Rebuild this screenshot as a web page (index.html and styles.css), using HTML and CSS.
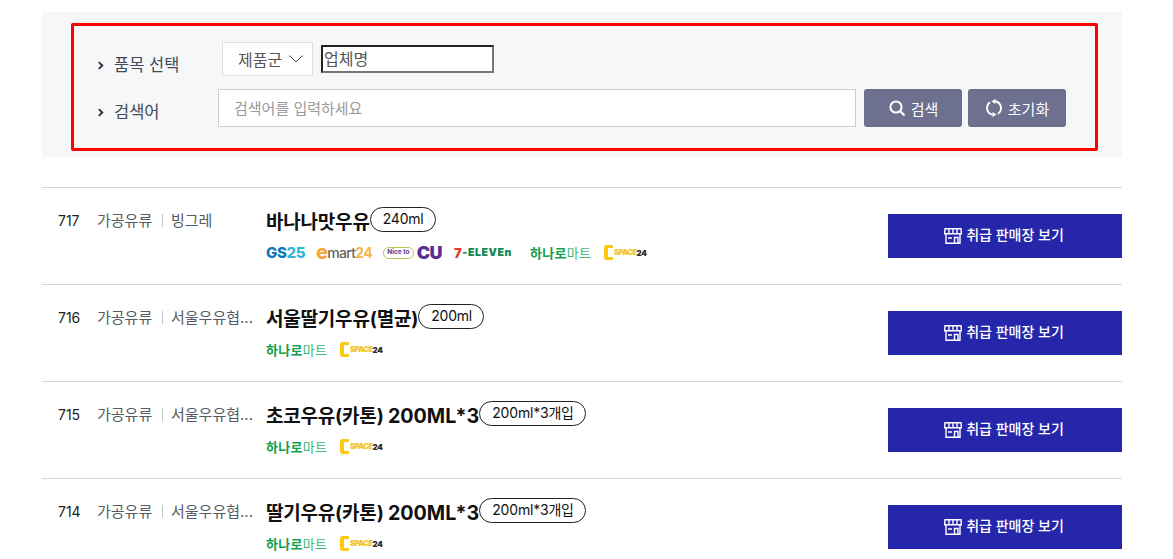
FILE: index.html
```html
<!DOCTYPE html>
<html lang="ko">
<head>
<meta charset="utf-8">
<title>품목 검색</title>
<link rel="stylesheet" href="styles.css">
</head>
<body>
<main class="page">
  <section class="search-panel">
    <form class="search-box">
      <div class="form-row row-one">
        <span class="field-label">품목 선택</span>
        <div class="select-box">제품군
          <svg class="chev" width="14" height="8" viewBox="0 0 14 8"><path d="M.5 .5l6.500 6.500 6.500-6.500" fill="none" stroke="#444" stroke-width="1"/></svg>
        </div>
        <input class="plain-input" type="text" value="업체명">
      </div>
      <div class="form-row row-two">
        <span class="field-label">검색어</span>
        <input class="keyword" type="text" placeholder="검색어를 입력하세요">
        <button class="action" type="button">
          <svg width="18" height="18" viewBox="0 0 18 18"><circle cx="8" cy="8" r="5.600" fill="none" stroke="#fff" stroke-width="2"/><path d="M12 12l4.500 4.500" stroke="#fff" stroke-width="2.200"/></svg>
          검색
        </button>
        <button class="action" type="button">
          <svg width="18" height="18" viewBox="0 0 18 18"><path d="M5 3.300A7 7 0 0 0 7.500 15.800M12.900 14.800A7 7 0 0 0 10.500 2.200" fill="none" stroke="#fff" stroke-width="1.900"/><path d="M10.500 -.2v5.200L6.500 2.500zM7.500 13v5l4-2.500z" fill="#fff"/></svg>
          초기화
        </button>
      </div>
    </form>
  </section>

  <ul class="product-list">
    <li class="product">
      <span class="num">717</span>
      <span class="cat">가공유류</span>
      <span class="brand">빙그레</span>
      <div class="info">
        <div class="title-line"><strong class="name">바나나맛우유</strong><span class="pill">240ml</span></div>
        <div class="logos">
          <span class="logo gs"><b>GS</b><i>25</i></span>
          <span class="logo emart"><b>e</b><u>mart</u><i>24</i></span>
          <span class="logo cu"><em>Nice to</em><b>CU</b></span>
          <span class="logo seven"><b>7</b><i>-ELEVEn</i></span>
          <span class="logo hanaro"><b>하나로</b><i>마트</i></span>
          <span class="logo cspace"><s class="c-mark"></s><i>SPACE</i><u>24</u></span>
        </div>
      </div>
      <a class="shop-btn" href="#"><svg class="store" width="18" height="16" viewBox="0 0 18 16"><path d="M1 .8h16l.4 5H.6zM5 1v4.800M9 1v4.800M13 1v4.800M2 6v9.200h14V6M10.500 15V9.500h3.500V15M4 10h4" fill="none" stroke="#fff" stroke-width="1.400"/></svg><span>취급 판매장 보기</span></a>
    </li>
    <li class="product">
      <span class="num">716</span>
      <span class="cat">가공유류</span>
      <span class="brand">서울우유협...</span>
      <div class="info">
        <div class="title-line"><strong class="name">서울딸기우유(멸균)</strong><span class="pill">200ml</span></div>
        <div class="logos">
          <span class="logo hanaro"><b>하나로</b><i>마트</i></span>
          <span class="logo cspace"><s class="c-mark"></s><i>SPACE</i><u>24</u></span>
        </div>
      </div>
      <a class="shop-btn" href="#"><svg class="store" width="18" height="16" viewBox="0 0 18 16"><path d="M1 .8h16l.4 5H.6zM5 1v4.800M9 1v4.800M13 1v4.800M2 6v9.200h14V6M10.500 15V9.500h3.500V15M4 10h4" fill="none" stroke="#fff" stroke-width="1.400"/></svg><span>취급 판매장 보기</span></a>
    </li>
    <li class="product">
      <span class="num">715</span>
      <span class="cat">가공유류</span>
      <span class="brand">서울우유협...</span>
      <div class="info">
        <div class="title-line"><strong class="name">초코우유(카톤) <span class="spec">200ML*3</span></strong><span class="pill">200ml*3개입</span></div>
        <div class="logos">
          <span class="logo hanaro"><b>하나로</b><i>마트</i></span>
          <span class="logo cspace"><s class="c-mark"></s><i>SPACE</i><u>24</u></span>
        </div>
      </div>
      <a class="shop-btn" href="#"><svg class="store" width="18" height="16" viewBox="0 0 18 16"><path d="M1 .8h16l.4 5H.6zM5 1v4.800M9 1v4.800M13 1v4.800M2 6v9.200h14V6M10.500 15V9.500h3.500V15M4 10h4" fill="none" stroke="#fff" stroke-width="1.400"/></svg><span>취급 판매장 보기</span></a>
    </li>
    <li class="product">
      <span class="num">714</span>
      <span class="cat">가공유류</span>
      <span class="brand">서울우유협...</span>
      <div class="info">
        <div class="title-line"><strong class="name">딸기우유(카톤) <span class="spec">200ML*3</span></strong><span class="pill">200ml*3개입</span></div>
        <div class="logos">
          <span class="logo hanaro"><b>하나로</b><i>마트</i></span>
          <span class="logo cspace"><s class="c-mark"></s><i>SPACE</i><u>24</u></span>
        </div>
      </div>
      <a class="shop-btn" href="#"><svg class="store" width="18" height="16" viewBox="0 0 18 16"><path d="M1 .8h16l.4 5H.6zM5 1v4.800M9 1v4.800M13 1v4.800M2 6v9.200h14V6M10.500 15V9.500h3.500V15M4 10h4" fill="none" stroke="#fff" stroke-width="1.400"/></svg><span>취급 판매장 보기</span></a>
    </li>
  </ul>
</main>
</body>
</html>
```
FILE: styles.css
```css
* { box-sizing: border-box; }
html, body { margin: 0; height: 559px; overflow: hidden; background: #fff; }
body {
  font-family: Inter, "Noto Sans CJK KR", sans-serif;
  color: #111;
}
.page { width: 1080px; margin-left: 42px; padding-top: 12px; }

.search-panel {
  background: #f6f7f9;
  height: 145px;
  padding: 11px 24px 0 29px;
}
.search-box {
  height: 128px;
  border: 3px solid #fe0000;
  border-radius: 2px;
  padding: 16px 28px 0 23px;
}
.form-row { display: flex; align-items: center; }
.row-one { height: 34px; }
.row-two { height: 38px; margin-top: 13px; }
.field-label {
  position: relative;
  display: block;
  font-size: 16.500px;
  color: #444a55;
  padding-left: 17px;
}
.row-one .field-label { width: 125px; margin-top: 9px; }
.row-two .field-label { width: 121px; margin-top: 5px; }
.field-label::before {
  content: "";
  position: absolute;
  left: -2px;
  top: 9px;
  width: 6px;
  height: 6px;
  border-top: 3px solid #2b2f36;
  border-right: 3px solid #2b2f36;
  transform: scale(.62) rotate(45deg);
}
.select-box {
  width: 91px;
  height: 34px;
  border: 1px solid #dcdee3;
  background: #fff;
  display: flex;
  align-items: center;
  padding-left: 15px;
  gap: 7px;
  font-size: 16px;
  color: #555;
}
.chev { flex: none; }
.plain-input {
  width: 173px;
  height: 28px;
  margin-left: 8px;
  padding: 0 1px 2px;
  border: 2px inset #767676;
  background: #fff;
  font: 16px Inter, "Noto Sans CJK KR", sans-serif;
  color: #555;
}
.keyword {
  width: 638px;
  height: 38px;
  border: 1px solid #cfcfcf;
  background: #fff;
  padding: 0 15px;
  font: 15px Inter, "Noto Sans CJK KR", sans-serif;
}
.keyword::placeholder { color: #9a9a9a; opacity: 1; }
.action {
  width: 98px;
  height: 38px;
  margin-left: 8px;
  border: 0;
  border-radius: 3px;
  background: #6e7090;
  color: #fff;
  display: flex;
  align-items: center;
  justify-content: center;
  gap: 5px;
  font: 15px Inter, "Noto Sans CJK KR", sans-serif;
}
.action + .action { margin-left: 6px; }

.product-list { list-style: none; margin: 30px 0 0; padding: 0; }
.product {
  height: 97px;
  border-top: 1px solid #d4d4d4;
  display: flex;
  align-items: center;
  padding-left: 16px;
}
.num { width: 39px; font-size: 14px; color: #222; margin-top: -31px; }
.cat {
  width: 65px;
  font-size: 15px;
  color: #555b66;
  margin-top: -33px;
  position: relative;
  white-space: nowrap;
}
.cat::after {
  content: "";
  position: absolute;
  left: 65px;
  top: 5px;
  width: 1px;
  height: 13px;
  background: #c4c4c4;
}
.brand {
  width: 82px;
  margin-left: 9px;
  font-size: 15px;
  color: #555b66;
  margin-top: -33px;
  white-space: nowrap;
}
.info { flex: 1; margin-left: 13px; margin-top: -2px; }
.title-line { display: flex; align-items: center; height: 30px; margin-top: -4px; }
.name { font-size: 19px; font-weight: 700; letter-spacing: -.2px; color: #111; white-space: nowrap; }
.spec { font-size: 19.700px; letter-spacing: 0; }
.pill {
  height: 25px;
  margin-top: -3px;
  padding: 0 11px 0 12px;
  border: 1px solid #222;
  border-radius: 13px;
  font-size: 14px;
  font-weight: 400;
  letter-spacing: -.2px;
  line-height: 21px;
  color: #111;
  white-space: nowrap;
}
.logos { display: flex; align-items: center; gap: 12px; height: 16px; margin-top: 9px; }
.logo { display: inline-flex; align-items: center; height: 16px; white-space: nowrap; font-style: normal; }
.logo b, .logo i, .logo u, .logo em { font-style: normal; text-decoration: none; }

.gs { width: 38px; font-size: 15px; font-weight: 800; letter-spacing: -.3px; }
.gs b { color: #0f76b8; font-weight: 800; }
.gs i { color: #2fb6dc; }
.emart { width: 55px; font-size: 14px; letter-spacing: -.7px; font-weight: 500; }
.emart b { color: #f5a93c; font-size: 20px; line-height: 14px; font-weight: 800; margin-top: -2px; }
.emart u { color: #66625c; }
.emart i { color: #f5b552; font-weight: 700; }
.cu { width: 59px; gap: 3px; }
.cu em {
  width: 31px;
  height: 12px;
  border: 1.500px solid #a8cf55;
  border-radius: 6px;
  font-size: 6.500px;
  line-height: 9px;
  text-align: center;
  color: #5a3a92;
  font-weight: 700;
}
.cu b { font-size: 18px; font-weight: 900; letter-spacing: -.6px; color: #5b2f92; }
.seven { width: 64px; font-size: 10.500px; font-weight: 900; letter-spacing: .6px; }
.seven b { color: #e8392e; font-size: 13px; font-weight: 900; }
.seven i { color: #118a55; }
.hanaro { width: 62px; font-size: 13px; letter-spacing: .3px; }
.hanaro b { color: #12a150; font-weight: 700; }
.hanaro i { color: #3bb774; font-weight: 400; }
.cspace { width: 45px; font-weight: 900; }
.c-mark {
  display: block;
  flex: none;
  width: 9px;
  height: 15px;
  border: solid #fdc90f;
  border-width: 3px 0 3px 4px;
  border-radius: 3px 1px 1px 3px;
}
.cspace i { color: #f4c21a; font-size: 7.500px; letter-spacing: -.5px; margin-left: 1px; }
.cspace u { color: #2a2a2a; font-size: 8px; letter-spacing: -.4px; }

.shop-btn {
  width: 234px;
  height: 44px;
  background: #2626ab;
  color: #fff;
  display: flex;
  align-items: center;
  justify-content: center;
  gap: 4px;
  padding-right: 2px;
  font-size: 14px;
  font-weight: 500;
  text-decoration: none;
}
.shop-btn span { margin-top: -4px; }
.store { flex: none; }
```
